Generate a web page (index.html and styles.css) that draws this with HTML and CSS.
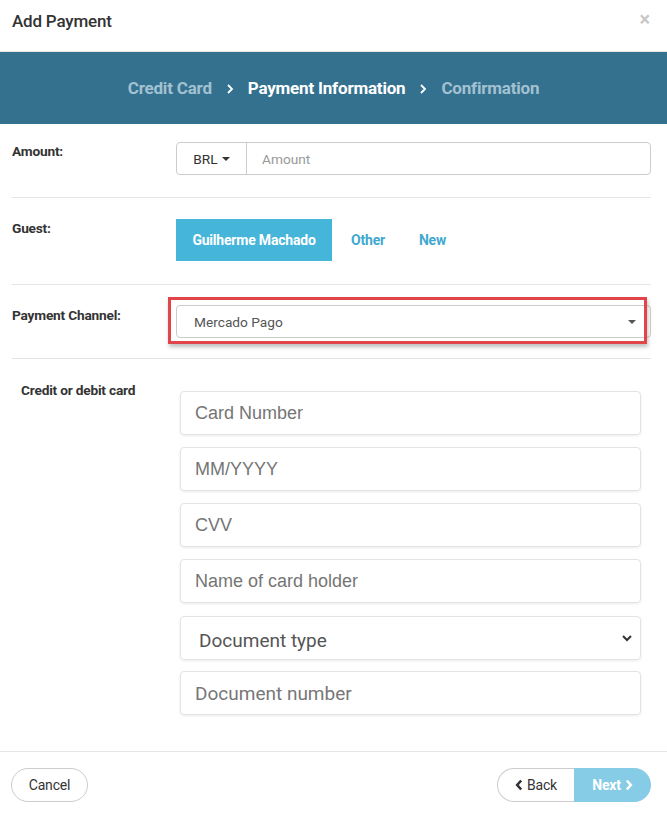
FILE: index.html
```html
<!DOCTYPE html>
<html>
<head>
<meta charset="utf-8">
<link rel="stylesheet" href="styles.css">
</head>
<body>
<div class="modal">
  <div class="modal-header">
    <h1 class="title">Add Payment</h1>
    <span class="close">×</span>
  </div>
  <div class="steps">
    <span class="step done">Credit Card</span>
    <svg class="sep" width="8" height="12" viewBox="0 0 8 12"><path d="M2 2l4 4-4 4" fill="none" stroke="#fff" stroke-width="1.8"/></svg>
    <span class="step active">Payment Information</span>
    <svg class="sep" width="8" height="12" viewBox="0 0 8 12"><path d="M2 2l4 4-4 4" fill="none" stroke="#fff" stroke-width="1.8"/></svg>
    <span class="step">Confirmation</span>
  </div>

  <div class="row row-amount">
    <div class="label">Amount:</div>
    <div class="input-group">
      <div class="addon">BRL <span class="caret"></span></div>
      <div class="ig-input">Amount</div>
    </div>
  </div>

  <div class="row row-guest">
    <div class="label">Guest:</div>
    <div class="guest-btns">
      <span class="gbtn selected">Guilherme Machado</span>
      <span class="gbtn">Other</span>
      <span class="gbtn">New</span>
    </div>
  </div>

  <div class="row row-channel">
    <div class="label">Payment Channel:</div>
    <div class="select-wrap">
      <div class="select">Mercado Pago <span class="caret"></span></div>
      <div class="highlight"></div>
    </div>
  </div>

  <div class="card-section">
    <div class="card-label">Credit or debit card</div>
    <div class="fields">
      <div class="field">Card Number</div>
      <div class="field">MM/YYYY</div>
      <div class="field">CVV</div>
      <div class="field">Name of card holder</div>
      <div class="field field-select"><span class="doc-type">Document type</span>
        <svg width="12" height="8" viewBox="0 0 12 8"><path d="M2 2l4 4 4-4" fill="none" stroke="#333" stroke-width="2"/></svg>
      </div>
      <div class="field field-doc">Document number</div>
    </div>
  </div>

  <div class="footer">
    <span class="btn pill">Cancel</span>
    <div class="btn-group">
      <span class="btn back"><svg width="8" height="12" viewBox="0 0 8 12"><path d="M6.2 1.5L2.2 6l4 4.5" fill="none" stroke="#333" stroke-width="2.6"/></svg>Back</span>
      <span class="btn next">Next<svg width="8" height="12" viewBox="0 0 8 12"><path d="M1.8 1.5l4 4.5-4 4.5" fill="none" stroke="#fff" stroke-width="2.6"/></svg></span>
    </div>
  </div>
</div>
</body>
</html>
```

FILE: styles.css
```css
html, body {
  margin: 0;
  padding: 0;
  background: #fff;
}
body {
  font-family: Roboto, "Liberation Sans", sans-serif;
  color: #333;
  width: 667px;
  height: 813px;
  overflow: hidden;
}
.modal {
  width: 667px;
}
.modal-header {
  height: 52px;
  border-bottom: 1px solid #e5e5e5;
  box-sizing: border-box;
  display: flex;
  justify-content: space-between;
  align-items: flex-start;
  padding: 11px 17px 0 12px;
}
.title {
  margin: 0;
  font-size: 17px;
  font-weight: 500;
  line-height: 20px;
  color: #333;
  letter-spacing: -0.2px;
}
.close {
  font-size: 20px;
  line-height: 16px;
  color: #c8c8c8;
  font-weight: 700;
}
.steps {
  height: 72px;
  background: #34718f;
  display: flex;
  align-items: center;
  justify-content: center;
  gap: 12px;
  font-size: 17px;
  font-weight: 700;
  letter-spacing: -0.2px;
}
.step {
  color: #a3c1d0;
}
.step.active {
  color: #fff;
}
.sep {
  margin: 1px 2px 0;
}
.row {
  margin: 0 16px 0 12px;
  display: grid;
  grid-template-columns: 164px 1fr;
  border-bottom: 1px solid #e5e5e5;
}
.label {
  font-size: 13.7px;
  font-weight: 700;
  color: #333;
  letter-spacing: -0.2px;
}
.row-amount {
  padding: 18px 0 22px;
}
.row-amount .label {
  padding-top: 1px;
}
.input-group {
  display: flex;
  height: 33px;
  border: 1px solid #ccc;
  border-radius: 4px;
  box-sizing: border-box;
}
.addon {
  width: 70px;
  border-right: 1px solid #ccc;
  display: flex;
  align-items: center;
  justify-content: center;
  font-size: 13.7px;
  color: #333;
  gap: 4px;
  box-sizing: border-box;
}
.caret {
  display: inline-block;
  width: 0;
  height: 0;
  border-left: 4px solid transparent;
  border-right: 4px solid transparent;
  border-top: 4px solid #333;
}
.ig-input {
  flex: 1;
  display: flex;
  align-items: center;
  padding-left: 15px;
  font-size: 13.7px;
  color: #999;
}
.row-guest {
  padding: 21px 0 23px;
}
.row-guest .label {
  padding-top: 1px;
}
.guest-btns {
  display: flex;
  align-items: center;
}
.gbtn {
  height: 42px;
  display: flex;
  align-items: center;
  padding: 0 17px;
  font-size: 14px;
  font-weight: 700;
  color: #3fa9d0;
  letter-spacing: -0.2px;
}
.gbtn.selected {
  background: #45b5da;
  color: #fff;
  width: 156px;
  box-sizing: border-box;
  justify-content: center;
  padding: 0;
  margin-right: 2px;
}
.row-channel {
  padding: 20px 0 20px;
}
.row-channel .label {
  padding-top: 2px;
}
.select-wrap {
  position: relative;
}
.select {
  height: 33px;
  border: 1px solid #ccc;
  border-radius: 4px;
  box-sizing: border-box;
  display: flex;
  align-items: center;
  justify-content: space-between;
  padding: 0 14px 0 17px;
  font-size: 13.7px;
  color: #555;
}
.select .caret {
  border-top-color: #555;
}
.highlight {
  position: absolute;
  left: -8px;
  top: -8px;
  width: 479px;
  height: 47px;
  box-sizing: border-box;
  border: 3px solid #e24549;
  box-shadow: 1px 3px 4px rgba(0,0,0,0.25);
}
.card-section {
  margin: 0 26px 0 12px;
  padding: 32px 0 36px;
  display: grid;
  grid-template-columns: 168px 1fr;
}
.card-label {
  padding-left: 9px;
  margin-top: -9px;
  font-size: 13.7px;
  font-weight: 700;
  color: #333;
  letter-spacing: -0.2px;
}
.fields {
  display: flex;
  flex-direction: column;
  gap: 12px;
}
.field {
  height: 44px;
  box-sizing: border-box;
  border: 1px solid #e3e3e3;
  border-radius: 4px;
  box-shadow: 0 1px 3px rgba(0,0,0,0.08);
  display: flex;
  align-items: center;
  padding-left: 14px;
  font-family: "Liberation Sans", Arial, sans-serif;
  font-size: 18px;
  color: #757575;
}
.field-select {
  justify-content: space-between;
  padding: 0 7px 0 18px;
  font-family: Roboto, sans-serif;
  font-size: 19px;
  color: #555;
  margin-top: 1px;
  margin-bottom: -1px;
}
.doc-type {
  padding-top: 4px;
}
.field-doc {
  font-family: Roboto, sans-serif;
  font-size: 19px;
  color: #777;
}
.footer {
  border-top: 1px solid #e5e5e5;
  padding: 16px 16px 16px 11px;
  display: flex;
  justify-content: space-between;
  align-items: center;
}
.btn {
  height: 34px;
  box-sizing: border-box;
  display: inline-flex;
  align-items: center;
  justify-content: center;
  font-size: 14px;
  color: #333;
  letter-spacing: -0.2px;
}
.pill {
  width: 77px;
  border: 1px solid #ccc;
  border-radius: 17px;
}
.btn-group {
  display: flex;
}
.back {
  width: 77px;
  border: 1px solid #ccc;
  border-right: none;
  border-radius: 17px 0 0 17px;
  gap: 4px;
}
.next {
  width: 77px;
  background: #86cce6;
  color: #fff;
  font-weight: 700;
  border-radius: 0 17px 17px 0;
  gap: 4px;
}
```
